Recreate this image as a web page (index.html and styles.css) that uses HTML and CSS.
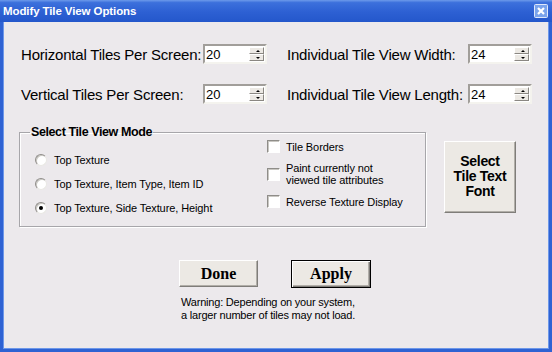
FILE: index.html
```html
<!DOCTYPE html>
<html>

<head>
    <meta charset="UTF-8">
    <title>Modify Tile View Options</title>
    <link rel="stylesheet" href="styles.css">
</head>

<body>
    <div class="window">
        <div class="titlebar">
            <span class="title">Modify Tile View Options</span>
            <span class="close">
                <svg width="14" height="14" viewBox="0 0 14 14">
                    <rect x="0.5" y="0.5" width="13" height="13" rx="1" fill="#7aa3ec" stroke="#dfe8fb"/>
                    <path d="M4 4 L10 10 M10 4 L4 10" stroke="#fff" stroke-width="2.2"/>
                </svg>
            </span>
        </div>
        <div class="frame">
            <div class="fields">
                <div class="row">
                    <label class="lbl lbl-left">Horizontal Tiles Per Screen:</label>
                    <div class="spin"><input type="text" value="20"><div class="btns"><span class="up"></span><span class="down"></span></div></div>
                    <label class="lbl lbl-right">Individual Tile View Width:</label>
                    <div class="spin"><input type="text" value="24"><div class="btns"><span class="up"></span><span class="down"></span></div></div>
                </div>
                <div class="row">
                    <label class="lbl lbl-left">Vertical Tiles Per Screen:</label>
                    <div class="spin"><input type="text" value="20"><div class="btns"><span class="up"></span><span class="down"></span></div></div>
                    <label class="lbl lbl-right">Individual Tile View Length:</label>
                    <div class="spin"><input type="text" value="24"><div class="btns"><span class="up"></span><span class="down"></span></div></div>
                </div>
            </div>

            <div class="middle">
                <fieldset class="group">
                    <legend>Select Tile View Mode</legend>
                    <div class="cols">
                        <div class="radios">
                            <div class="opt"><span class="radio"></span>Top Texture</div>
                            <div class="opt"><span class="radio"></span>Top Texture, Item Type, Item ID</div>
                            <div class="opt"><span class="radio on"></span>Top Texture, Side Texture, Height</div>
                        </div>
                        <div class="checks">
                            <div class="opt"><span class="check"></span>Tile Borders</div>
                            <div class="opt two"><span class="check"></span>Paint currently not<br>viewed tile attributes</div>
                            <div class="opt"><span class="check"></span>Reverse Texture Display</div>
                        </div>
                    </div>
                </fieldset>
                <button class="fontbtn">Select<br>Tile Text<br>Font</button>
            </div>

            <div class="bottom">
                <div class="actions">
                    <button class="act">Done</button>
                    <button class="act default">Apply</button>
                </div>
                <p class="warn">Warning: Depending on your system,<br>a larger number of tiles may not load.</p>
            </div>
        </div>
    </div>
</body>

</html>
```

FILE: styles.css
```css
* {box-sizing: border-box;}
body {margin: 0; font-family: "Liberation Sans", Arial, sans-serif;}

/* 창 전체 */
.window {
    width: 552px;
    height: 352px;
    display: flex;
    flex-direction: column;
}

/* 제목줄 */
.titlebar {
    height: 22px;
    display: flex;
    align-items: center;
    justify-content: space-between;
    padding: 0 4px 0 3px;
    background: linear-gradient(#6d9aea 0%, #3c70dc 12%, #2d60d3 55%, #2457cb 100%);
}
.title {color: white; font-weight: bold; font-size: 11.5px; letter-spacing: -0.1px;}
.close {display: flex;}
.close svg {display: block;}

.frame {
    flex: 1;
    background: #ece9ec;
    border: 3px solid #2f62d3;
    border-top: none;
    box-shadow: inset 1px 0 #6d97e9, inset -1px 0 #6d97e9, inset 0 -1px #6d97e9;
    padding: 22px 0 0 16px;
}

/* 위쪽 입력칸 */
.fields {display: flex; flex-direction: column; gap: 20px; padding-left: 2px;}
.row {display: flex; align-items: center; height: 20px;}
.lbl {font-size: 15px; color: #000; letter-spacing: -0.2px;}
.lbl-left {width: 182px;}
.lbl-right {width: 181px; margin-left: 20px;}

.spin {
    width: 64px;
    height: 20px;
    display: flex;
    background: white;
    border: 2px solid;
    border-color: #a19e9a #f4f3ee #f4f3ee #a19e9a;
    padding: 1px 1px 1px 0;
}
.spin input {
    width: 44px;
    border: none;
    padding: 0 0 0 1px;
    font-family: "Liberation Sans", Arial, sans-serif;
    font-size: 13px;
    outline: none;
    background: white;
}
.btns {width: 16px; display: flex; flex-direction: column; gap: 0;}
.btns span {
    flex: 1;
    background: #ece9e4;
    border: 1px solid;
    border-color: #fff #8a8782 #8a8782 #fff;
    position: relative;
}
.btns span::after {
    content: "";
    position: absolute;
    left: 6px;
    top: 2px;
    border-left: 2px solid transparent;
    border-right: 2px solid transparent;
}
.btns .up::after {border-bottom: 2px solid #000;}
.btns .down::after {border-top: 2px solid #000;}

/* 가운데 영역 */
.middle {display: flex; align-items: flex-start; margin-top: 21px;}
.group {
    width: 407px;
    height: 102px;
    margin: 0;
    padding: 0 0 0 15px;
    border: 1px solid #a7a6aa;
    box-shadow: 1px 1px #fff, inset 1px 1px #fff;
}
.group legend {
    font-weight: bold;
    font-size: 12.5px;
    padding: 0 1px;
    margin-left: -5px;
    letter-spacing: -0.4px;
}
.cols {display: flex;}
.radios {width: 232px; display: flex; flex-direction: column; gap: 11px; padding-top: 14px;}
.checks {display: flex; flex-direction: column; gap: 9px; padding-top: 1px;}
.opt {display: flex; align-items: center; font-size: 11px; height: 13px; letter-spacing: -0.1px;}
.opt.two {height: 24px; line-height: 12px;}

.radio {
    width: 12px;
    height: 12px;
    border-radius: 50%;
    background: #fff;
    border: 1px solid;
    border-color: #8f8d89 #e9e8e4 #e9e8e4 #8f8d89;
    box-shadow: inset 1px 1px #c9c7c2;
    margin-right: 7px;
    display: flex;
    align-items: center;
    justify-content: center;
}
.radio.on::after {content: ""; width: 4px; height: 4px; border-radius: 50%; background: #000;}

.check {
    width: 13px;
    height: 13px;
    background: #fff;
    border: 1px solid;
    border-color: #8f8d89 #fff #fff #8f8d89;
    box-shadow: inset 1px 1px #c9c7c2;
    margin-right: 6px;
    flex-shrink: 0;
}

.fontbtn {
    width: 72px;
    height: 72px;
    margin: 16px 0 0 18px;
    background: #ece9e4;
    border: 1px solid;
    border-color: #fff #7f7d79 #7f7d79 #fff;
    box-shadow: inset -1px -1px #b1aea8;
    font-family: "Liberation Sans", Arial, sans-serif;
    font-weight: bold;
    font-size: 14px;
    line-height: 15px;
    letter-spacing: -0.3px;
    color: #000;
    padding: 0 0 2px;
}

/* 아래 버튼 */
.bottom {margin-top: 33px; padding-left: 160px;}
.actions {display: flex; gap: 33px; align-items: flex-start;}
.act {
    width: 79px;
    height: 27px;
    background: #ece9e4;
    border: 1px solid;
    border-color: #fff #7f7d79 #7f7d79 #fff;
    box-shadow: inset -1px -1px #b1aea8;
    font-family: "Liberation Serif", "Times New Roman", serif;
    font-weight: bold;
    font-size: 16px;
    color: #000;
    padding: 0;
}
.act.default {
    width: 80px;
    height: 28px;
    border: 1px solid #000;
    box-shadow: inset 1px 1px #fff, inset -1px -1px #7f7d79, inset -2px -2px #b1aea8;
}
.warn {
    margin: 8px 0 0 2px;
    font-size: 11px;
    line-height: 13px;
    letter-spacing: -0.2px;
}
```
